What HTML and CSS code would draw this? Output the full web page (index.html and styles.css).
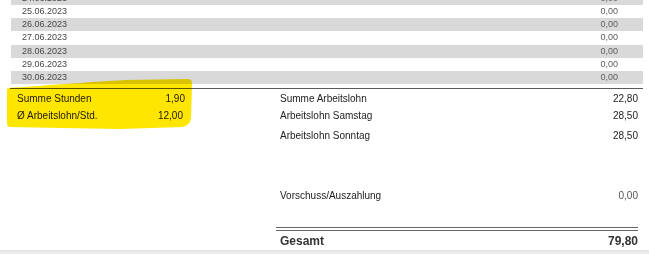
FILE: index.html
```html
<!DOCTYPE html>
<html lang="de">
<head>
<meta charset="utf-8">
<title>Abrechnung</title>
<link rel="stylesheet" href="styles.css">
</head>
<body>
<div class="page">
  <svg class="marker" width="649" height="254" viewBox="0 0 649 254" aria-hidden="true">
    <path d="M8,88 C40,86 90,82 125,80 L188,79 Q192,79 192,84 L191,118 Q190,126 182,127 L120,129 Q60,128 10,127 Q7,127 7,123 L7,92 Q7,88 8,88 Z" fill="#ffe600"/>
  </svg>
  <div class="rows">
    <div class="row alt"><span>24.06.2023</span><span>0,00</span></div>
    <div class="row"><span>25.06.2023</span><span>0,00</span></div>
    <div class="row alt"><span>26.06.2023</span><span>0,00</span></div>
    <div class="row"><span>27.06.2023</span><span>0,00</span></div>
    <div class="row alt"><span>28.06.2023</span><span>0,00</span></div>
    <div class="row"><span>29.06.2023</span><span>0,00</span></div>
    <div class="row alt"><span>30.06.2023</span><span>0,00</span></div>
  </div>
  <div class="rule"></div>
  <div class="summary">
    <div class="col-left">
      <div class="line"><span>Summe Stunden</span><span>1,90</span></div>
      <div class="line"><span>Ø Arbeitslohn/Std.</span><span class="shift">12,00</span></div>
    </div>
    <div class="col-right">
      <div class="line"><span>Summe Arbeitslohn</span><span>22,80</span></div>
      <div class="line"><span>Arbeitslohn Samstag</span><span>28,50</span></div>
      <div class="line sonntag"><span>Arbeitslohn Sonntag</span><span>28,50</span></div>
      <div class="line vorschuss"><span>Vorschuss/Auszahlung</span><span class="muted">0,00</span></div>
      <div class="double"></div>
      <div class="line total"><span>Gesamt</span><span>79,80</span></div>
    </div>
  </div>
</div>
<div class="bottombar"></div>
</body>
</html>
```

FILE: styles.css
```css
html, body {
  margin: 0;
  padding: 0;
  overflow: hidden;
  background: #fff;
}
body {
  width: 649px;
  height: 254px;
  font-family: "Liberation Sans", Arial, sans-serif;
  color: #222;
}
.page {
  position: relative;
  height: 250px;
  overflow: hidden;
}
.marker {
  position: absolute;
  left: 0;
  top: 0;
  mix-blend-mode: multiply;
  pointer-events: none;
  z-index: 2;
}
.rows {
  margin: -8px 6px 0 11px;
}
.row {
  display: flex;
  justify-content: space-between;
  height: 13.17px;
  line-height: 13.17px;
  padding: 0 25px 0 11px;
  font-size: 9px;
  color: #474747;
}
.row span:last-child {
  color: #5e5e5e;
}
.row.alt {
  background: #d9d9d9;
}
.rule {
  margin: 3.5px 6px 0 10px;
  border-top: 1px solid #5a5a5a;
}
.summary {
  display: grid;
  grid-template-columns: 168px 358px;
  column-gap: 95px;
  padding: 1.5px 0 0 17px;
  font-size: 10px;
}
.line {
  display: flex;
  justify-content: space-between;
  height: 17px;
  line-height: 17px;
}
.shift {
  margin-right: 2px;
}
.sonntag {
  margin-top: 3px;
}
.vorschuss {
  margin-top: 43px;
}
.muted {
  color: #555;
}
.double {
  margin: 22.5px 0 0 -4px;
  height: 2px;
  border-top: 1px solid #666;
  border-bottom: 1px solid #666;
}
.total {
  height: 20px;
  line-height: 21px;
  font-size: 12px;
  font-weight: bold;
  color: #333;
}
.bottombar {
  height: 4px;
  background: linear-gradient(#e4e4e4, #efefef);
}
```
